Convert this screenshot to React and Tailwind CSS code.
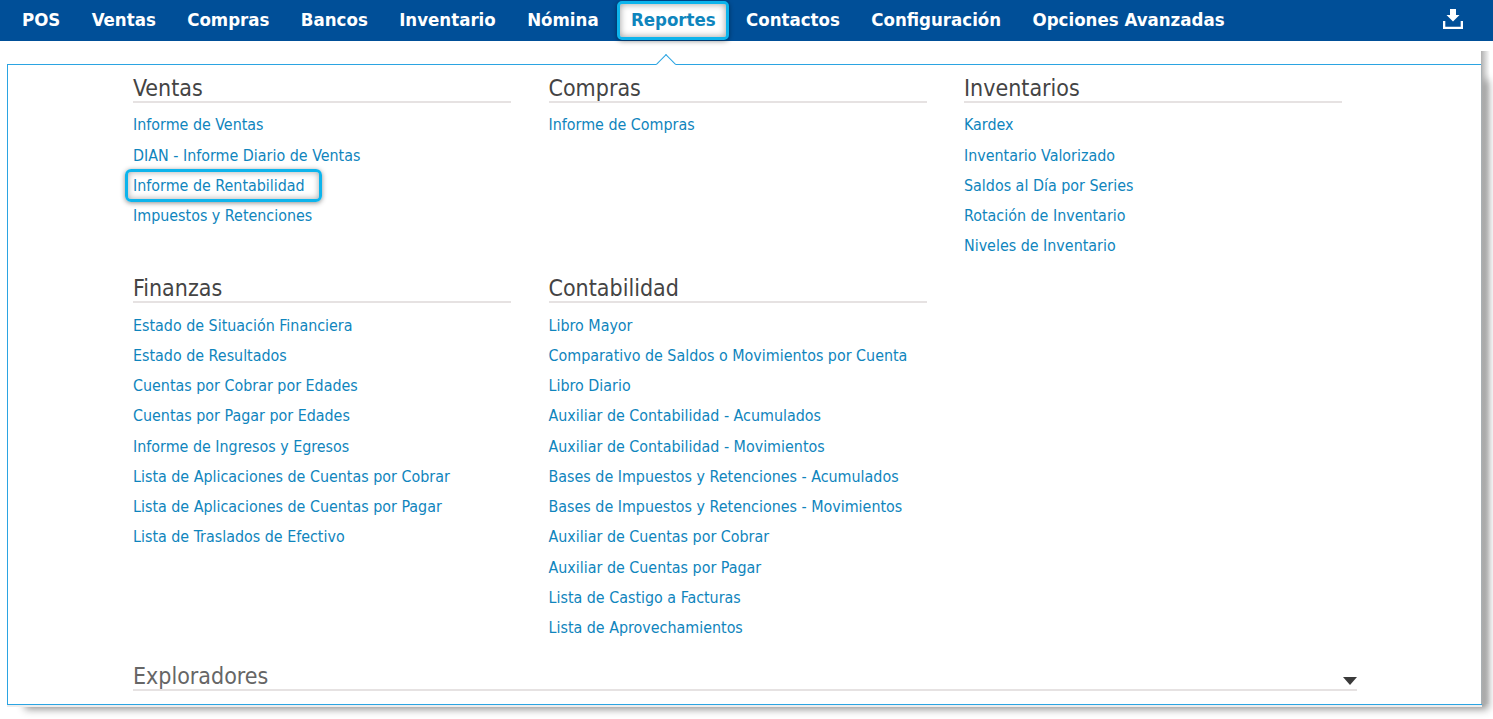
const navItems = ['POS', 'Ventas', 'Compras', 'Bancos', 'Inventario', 'Nómina', 'Reportes', 'Contactos', 'Configuración', 'Opciones Avanzadas'];

const sections = [
  { title: 'Ventas', links: ['Informe de Ventas', 'DIAN - Informe Diario de Ventas', 'Informe de Rentabilidad', 'Impuestos y Retenciones'] },
  { title: 'Compras', links: ['Informe de Compras'] },
  { title: 'Inventarios', links: ['Kardex', 'Inventario Valorizado', 'Saldos al Día por Series', 'Rotación de Inventario', 'Niveles de Inventario'] },
  {
    title: 'Finanzas',
    links: ['Estado de Situación Financiera', 'Estado de Resultados', 'Cuentas por Cobrar por Edades', 'Cuentas por Pagar por Edades', 'Informe de Ingresos y Egresos', 'Lista de Aplicaciones de Cuentas por Cobrar', 'Lista de Aplicaciones de Cuentas por Pagar', 'Lista de Traslados de Efectivo'],
  },
  {
    title: 'Contabilidad',
    links: ['Libro Mayor', 'Comparativo de Saldos o Movimientos por Cuenta', 'Libro Diario', 'Auxiliar de Contabilidad - Acumulados', 'Auxiliar de Contabilidad - Movimientos', 'Bases de Impuestos y Retenciones - Acumulados', 'Bases de Impuestos y Retenciones - Movimientos', 'Auxiliar de Cuentas por Cobrar', 'Auxiliar de Cuentas por Pagar', 'Lista de Castigo a Facturas', 'Lista de Aprovechamientos'],
  },
];

function NavItem({ label }) {
  if (label === 'Reportes') {
    return (
      <span className="ml-[3px] mr-px h-[39px] w-[112px] flex items-center justify-center pb-px rounded-[5px] border-[3px] border-[#0db4ec] bg-white text-[#0f85bd] shadow-[0_1px_5px_rgba(0,0,0,0.45),inset_0_0_7px_rgba(0,0,0,0.4)]">
        {label}
      </span>
    );
  }
  return <a className="px-[15.7px] pb-[2px] text-white">{label}</a>;
}

function Section({ title, links }) {
  return (
    <div>
      <h3 className="h-[28px] leading-[26px] text-[23px] text-[#444] border-b-2 border-[#e6e2e2]">{title}</h3>
      <ul className="mt-[7.3px]">
        {links.map(link => (
          <li key={link} className="h-[30.25px] flex items-center text-[15.9px] text-[#0f85bd]">
            {link === 'Informe de Rentabilidad' ? (
              <span className="-ml-[8px] h-[33px] w-[197px] shrink-0 flex items-center pl-[5px] rounded-[6px] border-[3px] border-[#0db4ec] shadow-[0_1px_5px_rgba(0,0,0,0.45),inset_0_0_6px_rgba(0,0,0,0.35)]">
                {link}
              </span>
            ) : link}
          </li>
        ))}
      </ul>
    </div>
  );
}

export default function App() {
  return (
    <div className="h-[719px] bg-white overflow-hidden font-['DejaVu_Sans_Condensed','DejaVu_Sans',sans-serif] [font-stretch:condensed]">
      <nav className="h-[41px] bg-[#004f98] flex items-center pl-[6.3px] text-[18.5px] font-bold">
        {navItems.map(item => <NavItem key={item} label={item} />)}
        <svg className="ml-auto mr-[30px] -mt-[3px]" width="20" height="20" viewBox="0 0 20 20" fill="white">
          <path d="M7 0h6v6h3.5L10 12.5 3.5 6H7z" />
          <path d="M0 12h2.3v5.7h15.4V12H20v8H0z" />
        </svg>
      </nav>

      <div className="relative mt-[23px] ml-[7px] w-[1475px] h-[641px] border border-[#2ba4e2] bg-white shadow-[0_2px_0_#eeeeee,12px_10px_8px_-6px_rgba(0,0,0,0.45)] pl-[125px] pt-[10px]">
        {/* right edge shadow runs up past the panel top */}
        <div className="absolute left-full -top-[14px] bottom-0 w-[9px] bg-linear-to-r from-[#b0b0b0] to-transparent" />
        <div className="absolute left-[651px] top-[-8px] size-[14px] rotate-45 bg-white border-l border-t border-[#2ba4e2]" />
        <div className="grid grid-cols-[378px_378px_378px] gap-x-[37.5px] gap-y-[13.7px]">
          {sections.map(section => <Section key={section.title} {...section} />)}
        </div>
        <div className="mt-[19.7px] w-[1224px] h-[28px] flex justify-between leading-[26px] text-[23px] text-[#666] border-b-2 border-[#e6e2e2]">
          Exploradores
          <span className="mt-[14px] w-0 h-0 border-x-[7px] border-x-transparent border-t-[8px] border-t-[#3a3a3a]" />
        </div>
      </div>
    </div>
  );
}
